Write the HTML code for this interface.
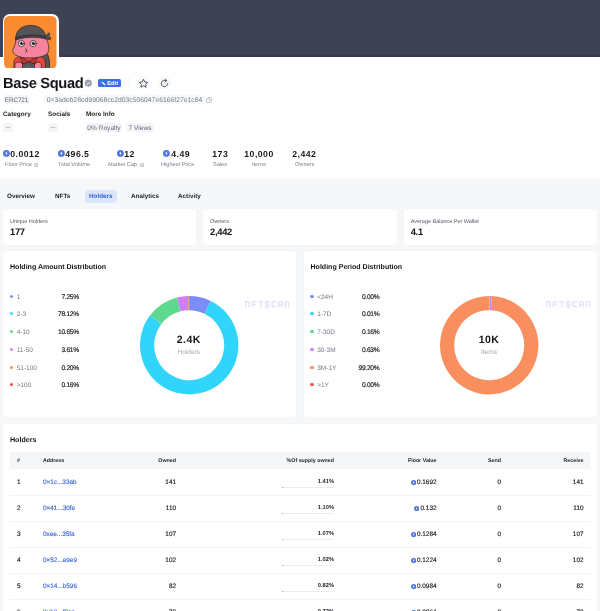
<!DOCTYPE html>
<html><head><meta charset="utf-8">
<style>
*{box-sizing:border-box;margin:0;padding:0}
html,body{width:600px;height:611px;overflow:hidden;background:#f6f7f9;font-family:"Liberation Sans",sans-serif;color:#14161a}
#root{position:relative;width:600px;height:611px;overflow:hidden;will-change:transform;text-rendering:geometricPrecision}
.a{position:absolute;white-space:nowrap;line-height:1}
.box{position:absolute}
.card{position:absolute;background:#fff;border-radius:3px;box-shadow:0 0 1.5px rgba(20,30,60,.05)}
.g{color:#737a86}
.b{font-weight:bold}
.r{text-align:right}
.tag{position:absolute;background:#f4f5f7;border-radius:2px;color:#5f6672;font-size:6px;line-height:11px;height:9px;text-align:center;white-space:nowrap}
.sv{font-size:8.7px;font-weight:bold;color:#14161a;letter-spacing:.47px}
.sl{font-size:5.6px;color:#7b808b}
.tab{font-size:6.3px;font-weight:bold;color:#1c1f25}
.th{font-size:5.3px;font-weight:bold;color:#22252b}
.td{font-size:6.4px;color:#14161a;-webkit-text-stroke:.14px currentColor}
.lg{font-size:6.5px;color:#747a86}
.lnk{color:#3e68d8}
.lv{font-size:6.7px;color:#101216;letter-spacing:-.27px;-webkit-text-stroke:.14px #101216}
</style></head><body><div id="root">

<div class="box" style="left:0;top:0;width:600px;height:56.6px;background:linear-gradient(#3d4354 0,#3d4354 54.8px,#353b4c 55.6px,#353b4c 100%)"></div>
<div class="box" style="left:0;top:56.6px;width:600px;height:122.4px;background:#fff"></div>
<div class="box" style="left:3px;top:13.5px;width:55.8px;height:56.7px;background:#fff;border-radius:7px"></div>
<svg class="box" style="left:4.3px;top:15.6px" width="52.7" height="52.8" viewBox="0 0 52.2 52.3" preserveAspectRatio="none">
<defs><clipPath id="av"><rect x="0" y="0" width="52.2" height="52.3" rx="5.2"/></clipPath></defs>
<g clip-path="url(#av)">
<rect width="52.2" height="52.9" fill="#fa8c2f"/>
<g stroke="#33282c" stroke-width=".75" stroke-linejoin="round" stroke-linecap="round">
<!-- cape / backpack -->
<path d="M36.5 33.5 C41 33 44.5 38 45 45 L45.3 53 L36 53 Z" fill="#555459"/>
<!-- shirt -->
<path d="M9.8 53 L9.8 45.5 C10 42 13.5 40 18 39.8 L34.5 39.6 C39 39.8 41 43 41 47 L41 53 Z" fill="#e8453c"/>
<!-- inner grey shirt -->
<path d="M17.6 53 L18.6 45.2 L21.6 48 L24.4 44.6 L27.3 48 L30.4 45.2 L31.2 53 Z" fill="#5b5a5f"/>
<!-- collar -->
<path d="M16.2 40.6 L24.4 45.2 L19 47.4 Z" fill="#c9342e"/>
<path d="M33 40.6 L24.4 45.2 L30 47.4 Z" fill="#c9342e"/>
<!-- arms -->
<path d="M10.8 53 L10.8 48.6 C11 46 13.5 45.4 15.8 45.8 C17.6 46.2 18.6 47.6 18.4 49.6 L18.2 53 Z" fill="#f5839e"/>
<path d="M30.4 53 L30.2 49.6 C30 47.6 31.2 46.2 33 45.8 C35.2 45.4 37 46.4 37 48.6 L37 53 Z" fill="#f5839e"/>
<!-- head -->
<path d="M12 20.5 C11.6 25 11.4 28.5 10 30.8 C8 33.4 8.4 37 11.4 38.6 C15 40.8 20 41.8 26 41.6 C33 41.4 40 40.4 43 37 C45.6 33.8 44 28 42.8 24.6 L41 19.6 Z" fill="#f6849f"/>
<!-- hat -->
<path d="M11.8 21.6 C11.6 14.4 17.6 9.3 26.4 9.3 C35 9.3 40.6 14 41.2 20.6 C33 18.2 20 18.4 11.8 21.6 Z" fill="#555459"/>
<path d="M11.6 21.8 C20 18.2 33 18 41.4 20.8 L41.6 22.8 C33 20.2 20 20.4 11.8 23.8 Z" fill="#47464b"/>
<!-- knot -->
<path d="M41 19.8 L44.6 16.6 L45.4 18.8 L43 20.6 L46.4 21.2 L45.6 23.6 L41.6 22.6 Z" fill="#555459"/>
<!-- eyes -->
<circle cx="17.3" cy="27.3" r="3.1" fill="#e4e0dd"/>
<circle cx="28.9" cy="27.3" r="3.1" fill="#e4e0dd"/>
</g>
<circle cx="17.7" cy="27.1" r="1.7" fill="#1b1618"/>
<circle cx="29.3" cy="27.1" r="1.7" fill="#1b1618"/>
<circle cx="18.3" cy="26.4" r=".55" fill="#fff"/>
<circle cx="29.9" cy="26.4" r=".55" fill="#fff"/>
<path d="M21.4 32.6 C22.8 32.7 22.8 34.1 21.8 34.2 C22.9 34.3 22.9 35.7 21.4 35.8" fill="none" stroke="#2a2326" stroke-width=".8" stroke-linecap="round"/>
</g></svg>
<div class="a b" style="left:3px;top:77px;font-size:14.7px;letter-spacing:-0.37px">Base Squad</div>
<svg class="box" style="left:84.4px;top:78.9px" width="8.6" height="8.6" viewBox="0 0 20 20">
<path d="M10 1 L12.4 2.6 L15.3 2.5 L16.3 5.2 L18.6 7 L17.8 9.8 L18.6 12.6 L16.3 14.4 L15.3 17.1 L12.4 17 L10 18.6 L7.6 17 L4.7 17.1 L3.7 14.4 L1.4 12.6 L2.2 9.8 L1.4 7 L3.7 5.2 L4.7 2.5 L7.6 2.6 Z" fill="#989eac"/>
<path d="M6.3 10 L9 12.6 L13.8 7.4" fill="none" stroke="#fff" stroke-width="2" stroke-linecap="round" stroke-linejoin="round"/></svg>
<div class="box" style="left:98px;top:79px;width:23px;height:8px;background:#3b6fe3;border-radius:1.5px"></div>
<svg class="box" style="left:101px;top:80.6px" width="5" height="5" viewBox="0 0 10 10"><path d="M1.2 1.2 L3.6 1.8 L9 7.2 L7.2 9 L1.8 3.6 Z" fill="#fff"/></svg>
<div class="a b" style="left:107.3px;top:82px;font-size:5.7px;color:#fff">Edit</div>
<div class="box" style="left:129px;top:77px;width:1px;height:11px;background:#f3f4f7"></div>
<div class="box" style="left:137px;top:76.4px;width:13px;height:13px;border-radius:50%;background:#f7f8fa"></div>
<div class="box" style="left:158px;top:76.4px;width:13px;height:13px;border-radius:50%;background:#f7f8fa"></div>
<svg class="box" style="left:138px;top:77.6px" width="11" height="11" viewBox="0 0 22 22">
<path d="M11 2.6 L13.5 8 L19.4 8.7 L15 12.7 L16.2 18.5 L11 15.6 L5.8 18.5 L7 12.7 L2.6 8.7 L8.5 8 Z" fill="none" stroke="#3a3f4a" stroke-width="1.7" stroke-linejoin="round"/></svg>
<svg class="box" style="left:158.8px;top:77.9px" width="11" height="11" viewBox="0 0 22 22">
<path d="M17.5 11 A6.5 6.5 0 1 1 14.2 5.3" fill="none" stroke="#3a3f4a" stroke-width="1.7" stroke-linecap="round"/>
<path d="M12.2 2.2 L15.6 5.4 L12 8" fill="none" stroke="#3a3f4a" stroke-width="1.7" stroke-linecap="round" stroke-linejoin="round"/></svg>
<div class="tag" style="left:3.5px;top:95px;width:26px;font-size:6.4px;letter-spacing:-.1px">ERC721</div>
<div class="tag" style="left:44px;top:95px;width:161px;background:#f8f9fb;font-size:6.8px;color:#747b88">0×3adeb28ed99068cc2d03c506047e6166f27e1c84</div>
<svg class="box" style="left:206px;top:96.5px" width="6" height="6" viewBox="0 0 12 12">
<rect x="1" y="3.5" width="7" height="7.5" rx="1.5" fill="none" stroke="#9aa1ad" stroke-width="1.2"/>
<path d="M4 3.2 V2.2 A1.2 1.2 0 0 1 5.2 1 H9.8 A1.2 1.2 0 0 1 11 2.2 V7.6 A1.2 1.2 0 0 1 9.8 8.8 H8.6" fill="none" stroke="#9aa1ad" stroke-width="1.2"/></svg>
<div class="a" style="left:3px;top:112px;font-size:6.4px;font-weight:bold;color:#22252b">Category</div>
<div class="a" style="left:48px;top:112px;font-size:6.4px;font-weight:bold;color:#22252b">Socials</div>
<div class="a" style="left:86px;top:112px;font-size:6.4px;font-weight:bold;color:#22252b">More Info</div>
<div class="tag" style="left:3px;top:123px;width:10px;letter-spacing:.7px;text-indent:.7px">--</div>
<div class="tag" style="left:48px;top:123px;width:10px;letter-spacing:.7px;text-indent:.7px">--</div>
<div class="tag" style="left:86px;top:123px;width:36px;font-size:6.6px">0% Royalty</div>
<div class="tag" style="left:126px;top:123px;width:28px;font-size:6.6px">7 Views</div>
<svg class="box" style="left:3.00px;top:149.90px" width="6.8" height="6.8" viewBox="0 0 10 10"><circle cx="5" cy="5" r="5" fill="#5274de"/><path d="M5 2.1 L6.6 5 L5 5.95 L3.4 5 Z M5 6.55 L6.5 5.65 L5 7.9 L3.5 5.65 Z" fill="#fff" opacity=".92"/></svg>
<div class="a sv" style="left:10.3px;top:149.5px">0.0012</div>
<div class="a sl" style="left:5px;top:163.4px">Floor Price</div>
<svg class="box" style="left:33.60px;top:162.70px" width="4.4" height="4.4" viewBox="0 0 10 10"><circle cx="5" cy="5" r="4" fill="none" stroke="#9399a6" stroke-width="1.5"/><rect x="4.3" y="4.4" width="1.4" height="2.8" fill="#9399a6"/><rect x="4.3" y="2.6" width="1.4" height="1.3" fill="#9399a6"/></svg>
<svg class="box" style="left:58.00px;top:149.90px" width="6.8" height="6.8" viewBox="0 0 10 10"><circle cx="5" cy="5" r="5" fill="#5274de"/><path d="M5 2.1 L6.6 5 L5 5.95 L3.4 5 Z M5 6.55 L6.5 5.65 L5 7.9 L3.5 5.65 Z" fill="#fff" opacity=".92"/></svg>
<div class="a sv" style="left:65.3px;top:149.5px">496.5</div>
<div class="a sl" style="left:58px;top:163.4px">Total Volume</div>
<svg class="box" style="left:117.00px;top:149.90px" width="6.8" height="6.8" viewBox="0 0 10 10"><circle cx="5" cy="5" r="5" fill="#5274de"/><path d="M5 2.1 L6.6 5 L5 5.95 L3.4 5 Z M5 6.55 L6.5 5.65 L5 7.9 L3.5 5.65 Z" fill="#fff" opacity=".92"/></svg>
<div class="a sv" style="left:124.3px;top:149.5px">12</div>
<div class="a sl" style="left:108px;top:163.4px">Market Cap</div>
<svg class="box" style="left:139.60px;top:162.70px" width="4.4" height="4.4" viewBox="0 0 10 10"><circle cx="5" cy="5" r="4" fill="none" stroke="#9399a6" stroke-width="1.5"/><rect x="4.3" y="4.4" width="1.4" height="2.8" fill="#9399a6"/><rect x="4.3" y="2.6" width="1.4" height="1.3" fill="#9399a6"/></svg>
<svg class="box" style="left:163.00px;top:149.90px" width="6.8" height="6.8" viewBox="0 0 10 10"><circle cx="5" cy="5" r="5" fill="#5274de"/><path d="M5 2.1 L6.6 5 L5 5.95 L3.4 5 Z M5 6.55 L6.5 5.65 L5 7.9 L3.5 5.65 Z" fill="#fff" opacity=".92"/></svg>
<div class="a sv" style="left:171.3px;top:149.5px">4.49</div>
<div class="a sl" style="left:161px;top:163.4px">Highest Price</div>
<div class="a sv" style="left:212.3px;top:149.5px">173</div>
<div class="a sl" style="left:213px;top:163.4px">Sales</div>
<div class="a sv" style="left:244.3px;top:149.5px">10,000</div>
<div class="a sl" style="left:252px;top:163.4px">Items</div>
<div class="a sv" style="left:292.3px;top:149.5px">2,442</div>
<div class="a sl" style="left:295px;top:163.4px">Owners</div>
<div class="box" style="left:84.5px;top:190px;width:32px;height:13px;background:#dbe6fb;border-radius:3.5px"></div>
<div class="a tab" style="left:7px;top:194px;">Overview</div>
<div class="a tab" style="left:55px;top:194px;">NFTs</div>
<div class="a tab" style="left:89px;top:194px;color:#2f62d8">Holders</div>
<div class="a tab" style="left:131px;top:194px;">Analytics</div>
<div class="a tab" style="left:178px;top:194px;">Activity</div>
<div class="card" style="left:3px;top:209.3px;width:193px;height:35.4px"></div>
<div class="a" style="left:10px;top:220.1px;font-size:5.6px;letter-spacing:-.06px;color:#5a606b">Unique Holders</div>
<div class="a b" style="left:10px;top:226.8px;font-size:9.4px;letter-spacing:-.3px">177</div>
<div class="card" style="left:203px;top:209.3px;width:194px;height:35.4px"></div>
<div class="a" style="left:210px;top:220.1px;font-size:5.6px;letter-spacing:-.06px;color:#5a606b">Owners</div>
<div class="a b" style="left:210px;top:226.8px;font-size:9.4px;letter-spacing:-.3px">2,442</div>
<div class="card" style="left:403.7px;top:209.3px;width:192.9px;height:35.4px"></div>
<div class="a" style="left:410.7px;top:220.1px;font-size:5.6px;letter-spacing:-.06px;color:#5a606b">Average Balance Per Wallet</div>
<div class="a b" style="left:410.7px;top:226.8px;font-size:9.4px;letter-spacing:-.3px">4.1</div>
<div class="card" style="left:3px;top:251.1px;width:293.2px;height:165.8px"></div>
<div class="a b" style="left:10px;top:263.6px;font-size:7.05px">Holding Amount Distribution</div>
<div class="box" style="left:9.8px;top:295.1px;width:3.3px;height:3.3px;border-radius:50%;background:#7b8df8"></div>
<div class="a lg" style="left:16.7px;top:295px">1</div>
<div class="a lv r" style="left:42px;width:37px;top:295px">7.25%</div>
<div class="box" style="left:9.8px;top:312.1px;width:3.3px;height:3.3px;border-radius:50%;background:#31d5fb"></div>
<div class="a lg" style="left:16.7px;top:312px">2-3</div>
<div class="a lv r" style="left:42px;width:37px;top:312px">78.12%</div>
<div class="box" style="left:9.8px;top:330.1px;width:3.3px;height:3.3px;border-radius:50%;background:#5fd98f"></div>
<div class="a lg" style="left:16.7px;top:330px">4-10</div>
<div class="a lv r" style="left:42px;width:37px;top:330px">10.65%</div>
<div class="box" style="left:9.8px;top:348.1px;width:3.3px;height:3.3px;border-radius:50%;background:#cf7ff5"></div>
<div class="a lg" style="left:16.7px;top:348px">11-50</div>
<div class="a lv r" style="left:42px;width:37px;top:348px">3.61%</div>
<div class="box" style="left:9.8px;top:366.1px;width:3.3px;height:3.3px;border-radius:50%;background:#f98f5f"></div>
<div class="a lg" style="left:16.7px;top:366px">51-100</div>
<div class="a lv r" style="left:42px;width:37px;top:366px">0.20%</div>
<div class="box" style="left:9.8px;top:383.1px;width:3.3px;height:3.3px;border-radius:50%;background:#ee4d4d"></div>
<div class="a lg" style="left:16.7px;top:383px">>100</div>
<div class="a lv r" style="left:42px;width:37px;top:383px">0.16%</div>
<svg class="box" style="left:138.60000000000002px;top:294.5px" width="100.4" height="100.4" viewBox="-50.2 -50.2 100.4 100.4"><path d="M0.000 -49.200 A49.2 49.2 0 0 1 21.645 -44.183 L15.398 -31.431 A35 35 0 0 0 0.000 -35.000 Z" fill="#7b8df8"/><path d="M21.645 -44.183 A49.2 49.2 0 1 1 -39.121 -29.836 L-27.830 -21.225 A35 35 0 1 0 15.398 -31.431 Z" fill="#31d5fb"/><path d="M-39.121 -29.836 A49.2 49.2 0 0 1 -12.176 -47.670 L-8.662 -33.911 A35 35 0 0 0 -27.830 -21.225 Z" fill="#5fd98f"/><path d="M-12.176 -47.670 A49.2 49.2 0 0 1 -1.144 -49.187 L-0.814 -34.991 A35 35 0 0 0 -8.662 -33.911 Z" fill="#cf7ff5"/><path d="M-1.144 -49.187 A49.2 49.2 0 0 1 -0.526 -49.197 L-0.374 -34.998 A35 35 0 0 0 -0.814 -34.991 Z" fill="#f98f5f"/><path d="M-0.526 -49.197 A49.2 49.2 0 0 1 -0.031 -49.200 L-0.022 -35.000 A35 35 0 0 0 -0.374 -34.998 Z" fill="#ee4d4d"/></svg>
<div class="a b" style="left:158.8px;width:60px;text-align:center;top:334.6px;font-size:10.6px;letter-spacing:.4px">2.4K</div>
<div class="a" style="left:158.8px;width:60px;text-align:center;top:349.6px;font-size:6.6px;color:#a3a9b6">Holders</div>
<svg class="box" style="left:245.1px;top:301.3px;overflow:visible" width="46" height="9" viewBox="0 0 46 9"><g fill="none" stroke="#e1e5f5" stroke-width="1.5"><path transform="translate(0.00 0)" d="M0.75 6.2 V1.55 Q0.75 0.75 1.55 0.75 H3.3500000000000005 Q4.15 0.75 4.15 1.55 V6.2"/><path transform="translate(6.58 0)" d="M0.75 6.2 V1.55 Q0.75 0.75 1.55 0.75 H4.9 M0.75 3.4 H4.300000000000001"/><path transform="translate(13.16 0)" d="M0 0.75 H4.9 M2.45 0.75 V6.2"/><path transform="translate(19.74 0)" d="M4.9 0.75 H1.55 Q0.75 0.75 0.75 1.55 V2.5 Q0.75 3.3000000000000003 1.55 3.3000000000000003 H3.3500000000000005 Q4.15 3.3000000000000003 4.15 4.1 V4.65 Q4.15 5.45 3.3500000000000005 5.45 H0 M2.45 5.45 V7.6"/><path transform="translate(26.32 0)" d="M4.9 0.75 H1.55 Q0.75 0.75 0.75 1.55 V4.65 Q0.75 5.45 1.55 5.45 H4.9"/><path transform="translate(32.90 0)" d="M0.75 6.2 V1.55 Q0.75 0.75 1.55 0.75 H3.3500000000000005 Q4.15 0.75 4.15 1.55 V6.2 M0.75 3.7 H4.15"/><path transform="translate(39.48 0)" d="M0.75 6.2 V1.55 Q0.75 0.75 1.55 0.75 H3.3500000000000005 Q4.15 0.75 4.15 1.55 V6.2"/></g></svg>
<div class="card" style="left:303.5px;top:251.1px;width:293.5px;height:165.8px"></div>
<div class="a b" style="left:310.5px;top:263.6px;font-size:7.05px">Holding Period Distribution</div>
<div class="box" style="left:310.3px;top:295.1px;width:3.3px;height:3.3px;border-radius:50%;background:#7b8df8"></div>
<div class="a lg" style="left:317.2px;top:295px">&lt;24H</div>
<div class="a lv r" style="left:342.5px;width:37px;top:295px">0.00%</div>
<div class="box" style="left:310.3px;top:312.1px;width:3.3px;height:3.3px;border-radius:50%;background:#31d5fb"></div>
<div class="a lg" style="left:317.2px;top:312px">1-7D</div>
<div class="a lv r" style="left:342.5px;width:37px;top:312px">0.01%</div>
<div class="box" style="left:310.3px;top:330.1px;width:3.3px;height:3.3px;border-radius:50%;background:#5fd98f"></div>
<div class="a lg" style="left:317.2px;top:330px">7-30D</div>
<div class="a lv r" style="left:342.5px;width:37px;top:330px">0.16%</div>
<div class="box" style="left:310.3px;top:348.1px;width:3.3px;height:3.3px;border-radius:50%;background:#cf7ff5"></div>
<div class="a lg" style="left:317.2px;top:348px">30-3M</div>
<div class="a lv r" style="left:342.5px;width:37px;top:348px">0.63%</div>
<div class="box" style="left:310.3px;top:366.1px;width:3.3px;height:3.3px;border-radius:50%;background:#f98f5f"></div>
<div class="a lg" style="left:317.2px;top:366px">3M-1Y</div>
<div class="a lv r" style="left:342.5px;width:37px;top:366px">99.20%</div>
<div class="box" style="left:310.3px;top:383.1px;width:3.3px;height:3.3px;border-radius:50%;background:#ee4d4d"></div>
<div class="a lg" style="left:317.2px;top:383px">&gt;1Y</div>
<div class="a lv r" style="left:342.5px;width:37px;top:383px">0.00%</div>
<svg class="box" style="left:438.8px;top:294.5px" width="100.4" height="100.4" viewBox="-50.2 -50.2 100.4 100.4"><path d="M0.000 -49.200 A49.2 49.2 0 0 1 0.031 -49.200 L0.022 -35.000 A35 35 0 0 0 0.000 -35.000 Z" fill="#31d5fb"/><path d="M0.031 -49.200 A49.2 49.2 0 0 1 0.526 -49.197 L0.374 -34.998 A35 35 0 0 0 0.022 -35.000 Z" fill="#5fd98f"/><path d="M0.526 -49.197 A49.2 49.2 0 0 1 2.472 -49.138 L1.759 -34.956 A35 35 0 0 0 0.374 -34.998 Z" fill="#cf7ff5"/><path d="M2.472 -49.138 A49.2 49.2 0 1 1 -0.000 -49.200 L-0.000 -35.000 A35 35 0 1 0 1.759 -34.956 Z" fill="#f98f5f"/></svg>
<div class="a b" style="left:459px;width:60px;text-align:center;top:334.6px;font-size:10.6px;letter-spacing:.4px">10K</div>
<div class="a" style="left:459px;width:60px;text-align:center;top:349.6px;font-size:6.6px;color:#a3a9b6">Items</div>
<svg class="box" style="left:545.6px;top:301.3px;overflow:visible" width="46" height="9" viewBox="0 0 46 9"><g fill="none" stroke="#e1e5f5" stroke-width="1.5"><path transform="translate(0.00 0)" d="M0.75 6.2 V1.55 Q0.75 0.75 1.55 0.75 H3.3500000000000005 Q4.15 0.75 4.15 1.55 V6.2"/><path transform="translate(6.58 0)" d="M0.75 6.2 V1.55 Q0.75 0.75 1.55 0.75 H4.9 M0.75 3.4 H4.300000000000001"/><path transform="translate(13.16 0)" d="M0 0.75 H4.9 M2.45 0.75 V6.2"/><path transform="translate(19.74 0)" d="M4.9 0.75 H1.55 Q0.75 0.75 0.75 1.55 V2.5 Q0.75 3.3000000000000003 1.55 3.3000000000000003 H3.3500000000000005 Q4.15 3.3000000000000003 4.15 4.1 V4.65 Q4.15 5.45 3.3500000000000005 5.45 H0 M2.45 5.45 V7.6"/><path transform="translate(26.32 0)" d="M4.9 0.75 H1.55 Q0.75 0.75 0.75 1.55 V4.65 Q0.75 5.45 1.55 5.45 H4.9"/><path transform="translate(32.90 0)" d="M0.75 6.2 V1.55 Q0.75 0.75 1.55 0.75 H3.3500000000000005 Q4.15 0.75 4.15 1.55 V6.2 M0.75 3.7 H4.15"/><path transform="translate(39.48 0)" d="M0.75 6.2 V1.55 Q0.75 0.75 1.55 0.75 H3.3500000000000005 Q4.15 0.75 4.15 1.55 V6.2"/></g></svg>
<div class="card" style="left:3px;top:423.6px;width:594px;height:200px"></div>
<div class="a b" style="left:10px;top:436.9px;font-size:7.1px">Holders</div>
<div class="box" style="left:10px;top:452px;width:580px;height:17px;background:#f5f6f8"></div>
<div class="a th" style="left:17px;top:458.5px">#</div>
<div class="a th" style="left:43px;top:458.5px">Address</div>
<div class="a th r" style="left:116px;width:60px;top:458.5px">Owned</div>
<div class="a th r" style="left:264px;width:70px;top:458.5px">%Of supply owned</div>
<div class="a th r" style="left:376px;width:60.5px;top:458.5px">Floor Value</div>
<div class="a th r" style="left:441px;width:60px;top:458.5px">Send</div>
<div class="a th r" style="left:523.5px;width:60px;top:458.5px">Receive</div>
<div class="a td" style="left:17px;top:480px">1</div>
<div class="a td lnk" style="left:43px;top:480px">0×1c...33ab</div>
<div class="a td r" style="left:116px;width:60px;top:480px">141</div>
<div class="a td r b" style="left:274px;width:60px;top:480px;font-size:5.7px;-webkit-text-stroke:0;color:#1d2026">1.41%</div>
<div class="box" style="left:282px;top:487.0px;width:52px;height:1px;background:#e9edf5"></div>
<div class="box" style="left:282px;top:487.0px;width:1.0px;height:1px;background:#7f97dc"></div>
<div class="a td r" style="left:376px;width:60.5px;top:480px">0.1692</div>
<svg class="box" style="left:410.53px;top:479.70px" width="5.2" height="5.2" viewBox="0 0 10 10"><circle cx="5" cy="5" r="5" fill="#5274de"/><path d="M5 2.1 L6.6 5 L5 5.95 L3.4 5 Z M5 6.55 L6.5 5.65 L5 7.9 L3.5 5.65 Z" fill="#fff" opacity=".92"/></svg>
<div class="a td r" style="left:441px;width:60px;top:480px">0</div>
<div class="a td r" style="left:523.5px;width:60px;top:480px">141</div>
<div class="box" style="left:10px;top:494.9px;width:580px;height:1px;background:#f2f3f6"></div>
<div class="a td" style="left:17px;top:506px">2</div>
<div class="a td lnk" style="left:43px;top:506px">0×41...30fe</div>
<div class="a td r" style="left:116px;width:60px;top:506px">110</div>
<div class="a td r b" style="left:274px;width:60px;top:506px;font-size:5.7px;-webkit-text-stroke:0;color:#1d2026">1.10%</div>
<div class="box" style="left:282px;top:513.0px;width:52px;height:1px;background:#e9edf5"></div>
<div class="box" style="left:282px;top:513.0px;width:1.0px;height:1px;background:#7f97dc"></div>
<div class="a td r" style="left:376px;width:60.5px;top:506px">0.132</div>
<svg class="box" style="left:414.09px;top:505.75px" width="5.2" height="5.2" viewBox="0 0 10 10"><circle cx="5" cy="5" r="5" fill="#5274de"/><path d="M5 2.1 L6.6 5 L5 5.95 L3.4 5 Z M5 6.55 L6.5 5.65 L5 7.9 L3.5 5.65 Z" fill="#fff" opacity=".92"/></svg>
<div class="a td r" style="left:441px;width:60px;top:506px">0</div>
<div class="a td r" style="left:523.5px;width:60px;top:506px">110</div>
<div class="box" style="left:10px;top:520.9px;width:580px;height:1px;background:#f2f3f6"></div>
<div class="a td" style="left:17px;top:532px">3</div>
<div class="a td lnk" style="left:43px;top:532px">0xee...35fa</div>
<div class="a td r" style="left:116px;width:60px;top:532px">107</div>
<div class="a td r b" style="left:274px;width:60px;top:532px;font-size:5.7px;-webkit-text-stroke:0;color:#1d2026">1.07%</div>
<div class="box" style="left:282px;top:539.1px;width:52px;height:1px;background:#e9edf5"></div>
<div class="box" style="left:282px;top:539.1px;width:1.0px;height:1px;background:#7f97dc"></div>
<div class="a td r" style="left:376px;width:60.5px;top:532px">0.1284</div>
<svg class="box" style="left:410.53px;top:531.80px" width="5.2" height="5.2" viewBox="0 0 10 10"><circle cx="5" cy="5" r="5" fill="#5274de"/><path d="M5 2.1 L6.6 5 L5 5.95 L3.4 5 Z M5 6.55 L6.5 5.65 L5 7.9 L3.5 5.65 Z" fill="#fff" opacity=".92"/></svg>
<div class="a td r" style="left:441px;width:60px;top:532px">0</div>
<div class="a td r" style="left:523.5px;width:60px;top:532px">107</div>
<div class="box" style="left:10px;top:546.9px;width:580px;height:1px;background:#f2f3f6"></div>
<div class="a td" style="left:17px;top:558px">4</div>
<div class="a td lnk" style="left:43px;top:558px">0×52...e9e9</div>
<div class="a td r" style="left:116px;width:60px;top:558px">102</div>
<div class="a td r b" style="left:274px;width:60px;top:558px;font-size:5.7px;-webkit-text-stroke:0;color:#1d2026">1.02%</div>
<div class="box" style="left:282px;top:565.1px;width:52px;height:1px;background:#e9edf5"></div>
<div class="box" style="left:282px;top:565.1px;width:1.0px;height:1px;background:#7f97dc"></div>
<div class="a td r" style="left:376px;width:60.5px;top:558px">0.1224</div>
<svg class="box" style="left:410.53px;top:557.85px" width="5.2" height="5.2" viewBox="0 0 10 10"><circle cx="5" cy="5" r="5" fill="#5274de"/><path d="M5 2.1 L6.6 5 L5 5.95 L3.4 5 Z M5 6.55 L6.5 5.65 L5 7.9 L3.5 5.65 Z" fill="#fff" opacity=".92"/></svg>
<div class="a td r" style="left:441px;width:60px;top:558px">0</div>
<div class="a td r" style="left:523.5px;width:60px;top:558px">102</div>
<div class="box" style="left:10px;top:573.0px;width:580px;height:1px;background:#f2f3f6"></div>
<div class="a td" style="left:17px;top:584px">5</div>
<div class="a td lnk" style="left:43px;top:584px">0×14...b596</div>
<div class="a td r" style="left:116px;width:60px;top:584px">82</div>
<div class="a td r b" style="left:274px;width:60px;top:584px;font-size:5.7px;-webkit-text-stroke:0;color:#1d2026">0.82%</div>
<div class="box" style="left:282px;top:591.2px;width:52px;height:1px;background:#e9edf5"></div>
<div class="box" style="left:282px;top:591.2px;width:1.0px;height:1px;background:#7f97dc"></div>
<div class="a td r" style="left:376px;width:60.5px;top:584px">0.0984</div>
<svg class="box" style="left:410.53px;top:583.90px" width="5.2" height="5.2" viewBox="0 0 10 10"><circle cx="5" cy="5" r="5" fill="#5274de"/><path d="M5 2.1 L6.6 5 L5 5.95 L3.4 5 Z M5 6.55 L6.5 5.65 L5 7.9 L3.5 5.65 Z" fill="#fff" opacity=".92"/></svg>
<div class="a td r" style="left:441px;width:60px;top:584px">0</div>
<div class="a td r" style="left:523.5px;width:60px;top:584px">82</div>
<div class="box" style="left:10px;top:599.0px;width:580px;height:1px;background:#f2f3f6"></div>
<div class="a td" style="left:17px;top:610px">6</div>
<div class="a td lnk" style="left:43px;top:610px">0×b9...f2aa</div>
<div class="a td r" style="left:116px;width:60px;top:610px">72</div>
<div class="a td r b" style="left:274px;width:60px;top:610px;font-size:5.7px;-webkit-text-stroke:0;color:#1d2026">0.72%</div>
<div class="box" style="left:282px;top:617.2px;width:52px;height:1px;background:#e9edf5"></div>
<div class="box" style="left:282px;top:617.2px;width:1.0px;height:1px;background:#7f97dc"></div>
<div class="a td r" style="left:376px;width:60.5px;top:610px">0.0864</div>
<svg class="box" style="left:410.53px;top:609.95px" width="5.2" height="5.2" viewBox="0 0 10 10"><circle cx="5" cy="5" r="5" fill="#5274de"/><path d="M5 2.1 L6.6 5 L5 5.95 L3.4 5 Z M5 6.55 L6.5 5.65 L5 7.9 L3.5 5.65 Z" fill="#fff" opacity=".92"/></svg>
<div class="a td r" style="left:441px;width:60px;top:610px">0</div>
<div class="a td r" style="left:523.5px;width:60px;top:610px">72</div>
</div></body></html>
